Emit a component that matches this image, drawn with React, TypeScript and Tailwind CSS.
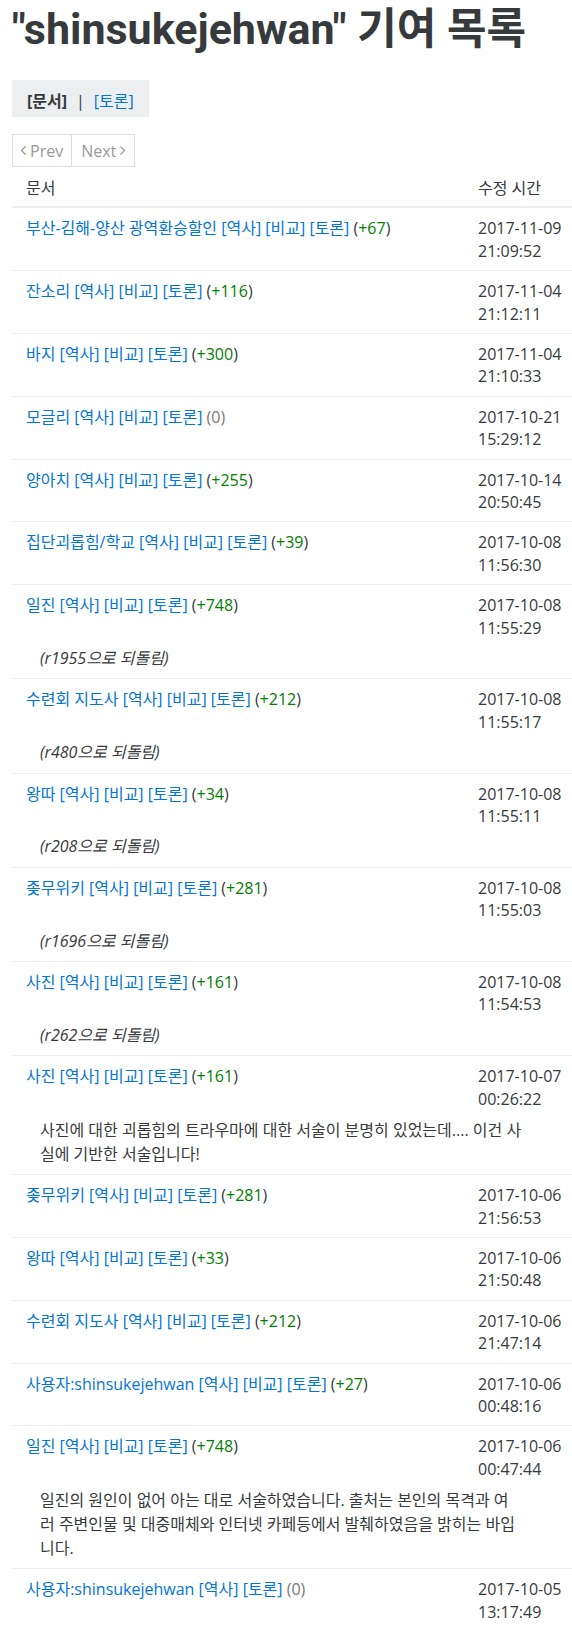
import React from 'react';

type Entry = {
    doc: string;
    diff: number;
    date: string;
    time: string;
    noCompare?: boolean;
    note?: string;
    comment?: string[];
};

const entries: Entry[] = [
    { doc: '부산-김해-양산 광역환승할인', diff: 67, date: '2017-11-09', time: '21:09:52' },
    { doc: '잔소리', diff: 116, date: '2017-11-04', time: '21:12:11' },
    { doc: '바지', diff: 300, date: '2017-11-04', time: '21:10:33' },
    { doc: '모글리', diff: 0, date: '2017-10-21', time: '15:29:12' },
    { doc: '양아치', diff: 255, date: '2017-10-14', time: '20:50:45' },
    { doc: '집단괴롭힘/학교', diff: 39, date: '2017-10-08', time: '11:56:30' },
    { doc: '일진', diff: 748, date: '2017-10-08', time: '11:55:29', note: 'r1955으로 되돌림' },
    { doc: '수련회 지도사', diff: 212, date: '2017-10-08', time: '11:55:17', note: 'r480으로 되돌림' },
    { doc: '왕따', diff: 34, date: '2017-10-08', time: '11:55:11', note: 'r208으로 되돌림' },
    { doc: '좆무위키', diff: 281, date: '2017-10-08', time: '11:55:03', note: 'r1696으로 되돌림' },
    { doc: '사진', diff: 161, date: '2017-10-08', time: '11:54:53', note: 'r262으로 되돌림' },
    {
        doc: '사진', diff: 161, date: '2017-10-07', time: '00:26:22',
        comment: ['사진에 대한 괴롭힘의 트라우마에 대한 서술이 분명히 있었는데.... 이건 사', '실에 기반한 서술입니다!'],
    },
    { doc: '좆무위키', diff: 281, date: '2017-10-06', time: '21:56:53' },
    { doc: '왕따', diff: 33, date: '2017-10-06', time: '21:50:48' },
    { doc: '수련회 지도사', diff: 212, date: '2017-10-06', time: '21:47:14' },
    { doc: '사용자:shinsukejehwan', diff: 27, date: '2017-10-06', time: '00:48:16' },
    {
        doc: '일진', diff: 748, date: '2017-10-06', time: '00:47:44',
        comment: [
            '일진의 원인이 없어 아는 대로 서술하였습니다. 출처는 본인의 목격과 여',
            '러 주변인물 및 대중매체와 인터넷 카페등에서 발췌하였음을 밝히는 바입',
            '니다.',
        ],
    },
    { doc: '사용자:shinsukejehwan', diff: 0, date: '2017-10-05', time: '13:17:49', noCompare: true },
];

function Chevron({ dir }: { dir: 'left' | 'right' }) {
    return (
        <svg width="7" height="11" viewBox="0 0 7 11" className="shrink-0">
            <polyline
                points={dir === 'left' ? '5.5,1.5 1.5,5.5 5.5,9.5' : '1.5,1.5 5.5,5.5 1.5,9.5'}
                fill="none"
                stroke="currentColor"
                strokeWidth="1.2"
            />
        </svg>
    );
}

function Diff({ n }: { n: number }) {
    if (n === 0) return <span className="text-[#777]">(0)</span>;
    return (
        <span>
            (<span className="text-[#008000]">+{n}</span>)
        </span>
    );
}

function EntryRow({ e, first }: { e: Entry; first: boolean }) {
    return (
        <div className={first ? '' : 'border-t border-[#eceeef]'}>
            <div className="flex">
                <div className="flex-1 pl-[14px] pt-[9px] pb-[8px]">
                    <a className="text-[#0275d8]">{e.doc}</a>{' '}
                    <a className="text-[#0275d8]">[역사]</a>{' '}
                    {!e.noCompare && (
                        <>
                            <a className="text-[#0275d8]">[비교]</a>{' '}
                        </>
                    )}
                    <a className="text-[#0275d8]">[토론]</a> <Diff n={e.diff} />
                </div>
                <div className="w-[108px] shrink-0 pl-[14px] pt-[9px] pb-[8px]">
                    {e.date}
                    <br />
                    {e.time}
                </div>
            </div>
            {e.note && <div className="pl-[28px] pb-[9px] italic">({e.note})</div>}
            {e.comment && (
                <div className="pl-[28px] pb-[8px] leading-[24px] whitespace-nowrap">
                    {e.comment.map((line, i) => (
                        <div key={i}>{line}</div>
                    ))}
                </div>
            )}
        </div>
    );
}

export default function App() {
    return (
        <div className="min-h-screen bg-white text-[#373a3c] font-['Open_Sans','Noto_Sans_CJK_KR',sans-serif] text-[16px] leading-[22.4px]">
            <div className="pl-[12px]">
                <h1 className="pt-[7px] font-['Roboto','Noto_Sans_CJK_KR',sans-serif] text-[43px] leading-[44px] font-bold text-[#373a3c]">
                    {'"shinsukejehwan" 기여 목록'}
                </h1>

                <div className="mt-[29px] inline-flex bg-[#eceeef] px-[15px] pt-[10px] pb-[5px]">
                    <span className="font-bold">[문서]</span>
                    <span className="mx-[9px]">|</span>
                    <a className="text-[#0275d8]">[토론]</a>
                </div>

                <div className="mt-[17px] flex text-[#999]">
                    <div className="flex h-[33px] items-center gap-[3px] border border-[#ddd] pl-[7px] pr-[8px]">
                        <Chevron dir="left" />
                        Prev
                    </div>
                    <div className="flex h-[33px] items-center gap-[3px] border border-l-0 border-[#ddd] pl-[9px] pr-[8px]">
                        Next
                        <Chevron dir="right" />
                    </div>
                </div>

                <div className="mt-[1px]">
                    <div className="flex border-b-2 border-[#eceeef]">
                        <div className="flex-1 pl-[14px] pt-[8.5px] pb-[7px]">문서</div>
                        <div className="w-[108px] shrink-0 pl-[14px] pt-[8.5px] pb-[7px]">수정 시간</div>
                    </div>
                    {entries.map((e, i) => (
                        <EntryRow key={i} e={e} first={i === 0} />
                    ))}
                </div>
            </div>
        </div>
    );
}
